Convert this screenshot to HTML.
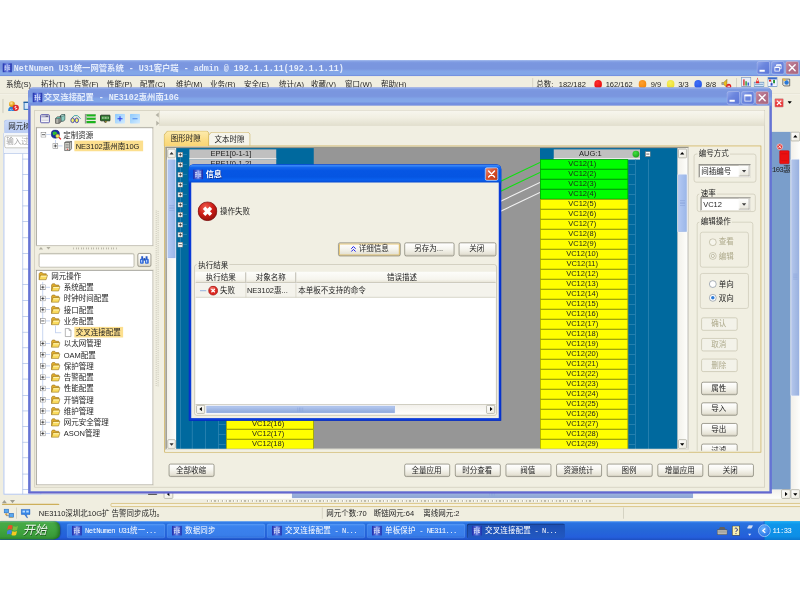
<!DOCTYPE html><html><head><meta charset="utf-8"><title>NetNumen U31</title><style>
html,body{margin:0;padding:0;background:#fff;}
body{width:800px;height:600px;overflow:hidden;position:relative;font-family:"Liberation Sans","Noto Sans CJK SC",sans-serif;}
#scr{position:absolute;left:0;top:60px;width:1280px;height:768px;transform:scale(.625);transform-origin:0 0;overflow:hidden;background:#F0EEE0;font-size:12px;line-height:12px;color:#1E1E1E;filter:blur(.55px);}
#scr div,#scr span.t,#scr svg.i{position:absolute;box-sizing:border-box;}
.t{white-space:nowrap;line-height:12px;font-size:12px;}
b{font-weight:bold;}
.mono{font-family:"Liberation Mono","Noto Sans CJK SC",monospace;}
.sim{font-family:"Liberation Mono","Noto Sans CJK SC",monospace;font-size:11.5px;letter-spacing:-.9px;}
.sim .cj{font-size:12px;letter-spacing:.2px;}
.ttl{background:linear-gradient(#A6BEEE 0,#7F9BE2 3px,#7A96DF 6px,#7A96DF 14px,#82A5E8 18px,#82A7E8 23px,#7390E0 25px,#7390E0 100%);}
.ttxt{color:#E4ECFB;font-weight:bold;font-size:13.33px;line-height:14px;}
.cbtn{border:1px solid rgba(255,255,255,.4);border-radius:3px;background:linear-gradient(135deg,#8FA6EA,#6C86DE 40%,#5B76D8);}
.cbtn.x{background:linear-gradient(135deg,#C98A9E,#B3718A 45%,#A8657E);}
.btn{border:1px solid #716F62;border-radius:3px;background:linear-gradient(#FFFFFF,#F6F5EF 45%,#E6E3D6 85%,#CFCBBC);text-align:center;font-size:12px;line-height:19px;white-space:nowrap;padding-right:2px;}
.btn.dis{border-color:#BFBBA4;background:#F3F2E9;color:#AEAA8C;}
.grp{border:1px solid #C7C4B0;border-radius:4px;}
.glab{background:#F0EEE0;padding:0 2px;}
.sbv{background:linear-gradient(90deg,#F2F0EA,#FEFEFB);}
.sbh{background:linear-gradient(#F2F0EA,#FEFEFB);}
.thumb{background:linear-gradient(90deg,#B4C9F4,#9AB6E8);border:1px solid #F4F7FD;border-radius:2px;box-shadow:inset 0 0 0 1px #98B2E4;}
.thumbh{background:linear-gradient(#BCCEF2,#A3BAE6 45%,#8DA8DA);border:1px solid #F4F7FD;border-radius:2px;box-shadow:inset 0 0 0 1px #98B2E4;}
.sbtn{background:linear-gradient(135deg,#FFFFFF,#ECEADF);border:1px solid #9C9A8C;border-radius:2px;}
.pm{background:#fff;border:1px solid #8A8A8A;}
.tb{background:linear-gradient(#3F8CF3,#2A71E0 12%,#2567D8 50%,#245EDC 85%,#1D4FC0);}
.ti{border-radius:3px;background:linear-gradient(#4C94F6,#3B82EE 20%,#397EEA 80%,#2C6CDC);box-shadow:inset 0 0 0 1px rgba(255,255,255,.12);color:#fff;}
.ti.act{background:linear-gradient(#1B4DAF,#1E52B7 30%,#2258C2);box-shadow:inset 1px 1px 1px rgba(0,0,0,.35);}
</style></head><body><div id="scr"><div class="ttl" style="left:0px;top:0px;width:1280px;height:26px;"></div><svg class="i" style="left:4px;top:5px" width="15" height="15" viewBox="0 0 16 16"><defs><linearGradient id="ai" x1="0" x2="1"><stop offset="0" stop-color="#1B2AA8"/><stop offset=".5" stop-color="#6F86E8"/><stop offset="1" stop-color="#1B2AA8"/></linearGradient></defs><rect width="16" height="16" fill="url(#ai)"/><path d="M3 5h3M10 4h3M3 8h4M9 8h4M4 11h2M10 11h3M8 2v12M5 4l-1 9M11 5v7" stroke="#E8EEFF" stroke-width="1.2" fill="none" opacity=".9"/></svg><span class="t ttxt mono" style="left:22px;top:7px;letter-spacing:0px;"><b>NetNumen U31统一网管系统 - U31客户端 - admin @ 192.1.1.11(192.1.1.11)</b></span><div class="cbtn" style="left:1211px;top:2px;width:21px;height:21px;"><svg class="i" style="left:-1px;top:-1px" width="21" height="21" viewBox="0 0 20 20"><rect x="4" y="13" width="8" height="3" fill="#fff"/></svg></div><div class="cbtn" style="left:1234px;top:2px;width:21px;height:21px;"><svg class="i" style="left:-1px;top:-1px" width="21" height="21" viewBox="0 0 20 20"><path d="M8 7.5V5.5h7v6H13" fill="none" stroke="#fff" stroke-width="1.2"/><path d="M8 5.800h7" stroke="#fff" stroke-width="1.800"/><rect x="5.5" y="9" width="7" height="6" fill="none" stroke="#fff" stroke-width="1.2"/><path d="M5.500 9.300h7" stroke="#fff" stroke-width="1.800"/></svg></div><div class="cbtn x" style="left:1257px;top:2px;width:21px;height:21px;"><svg class="i" style="left:-1px;top:-1px" width="21" height="21" viewBox="0 0 20 20"><path d="M5.5 5.5l9 9M14.5 5.5l-9 9" stroke="#fff" stroke-width="2.2" stroke-linecap="round"/></svg></div><div style="left:0px;top:26px;width:1280px;height:30px;background:#F0EEE0;"></div><span class="t " style="left:9.6px;top:33px;">系统(S)</span><span class="t " style="left:65.6px;top:33px;">拓扑(T)</span><span class="t " style="left:118.4px;top:33px;">告警(F)</span><span class="t " style="left:171.2px;top:33px;">性能(P)</span><span class="t " style="left:224px;top:33px;">配置(C)</span><span class="t " style="left:281.6px;top:33px;">维护(M)</span><span class="t " style="left:336px;top:33px;">业务(R)</span><span class="t " style="left:390.4px;top:33px;">安全(E)</span><span class="t " style="left:446.4px;top:33px;">统计(A)</span><span class="t " style="left:497.6px;top:33px;">收藏(V)</span><span class="t " style="left:552px;top:33px;">窗口(W)</span><span class="t " style="left:609.6px;top:33px;">帮助(H)</span><div style="left:852px;top:29px;width:1px;height:20px;background:#C5C2B2;"></div><span class="t " style="left:858px;top:33px;">总数:</span><span class="t " style="left:894px;top:33px;">182/182</span><div style="left:951px;top:32px;width:12px;height:13px;border-radius:6px 6px 5px 5px;background:radial-gradient(circle at 40% 35%,#FF3030,#E00000);"></div><span class="t " style="left:969px;top:33px;">162/162</span><div style="left:1022px;top:32px;width:12px;height:13px;border-radius:6px 6px 5px 5px;background:radial-gradient(circle at 40% 35%,#FFA030,#F08000);"></div><span class="t " style="left:1041px;top:33px;">9/9</span><div style="left:1067px;top:32px;width:12px;height:13px;border-radius:6px 6px 5px 5px;background:radial-gradient(circle at 40% 35%,#F8F060,#E8D820);"></div><span class="t " style="left:1085px;top:33px;">3/3</span><div style="left:1111px;top:32px;width:12px;height:13px;border-radius:6px 6px 5px 5px;background:radial-gradient(circle at 40% 35%,#4070F8,#2050E0);"></div><span class="t " style="left:1129px;top:33px;">8/8</span><svg class="i" style="left:1153px;top:29px" width="18" height="18" viewBox="0 0 18 18"><path d="M2 7h3l5-5v13l-5-5H2z" fill="#E8C020" stroke="#806010" stroke-width=".8"/><path d="M2 7h3v4H2z" fill="#A0A0A0"/><circle cx="13" cy="13" r="4" fill="#E02020"/><path d="M11 13h4" stroke="#fff" stroke-width="1.5"/></svg><div style="left:1178px;top:29px;width:1px;height:20px;background:#C5C2B2;"></div><svg class="i" style="left:1186px;top:27px" width="16" height="16" viewBox="0 0 16 16"><rect x=".5" y=".5" width="15" height="15" fill="#E8F0FA" stroke="#5A78A8"/><rect x="3" y="4" width="2.5" height="10" fill="#E04040"/><rect x="6.5" y="7" width="2.5" height="7" fill="#40A040"/><rect x="10" y="9" width="2.5" height="5" fill="#4060D0"/></svg><svg class="i" style="left:1206px;top:27px" width="17" height="16" viewBox="0 0 17 16"><rect x=".5" y="8.5" width="16" height="7" fill="#D8E8F8" stroke="#5080B0"/><path d="M2 12h13" stroke="#5080B0"/><path d="M6 1l3 9H3z" fill="#E82020"/><path d="M6 4v3" stroke="#fff" stroke-width="1.2"/></svg><svg class="i" style="left:1228px;top:27px" width="16" height="16" viewBox="0 0 16 16"><rect x=".5" y=".5" width="15" height="15" fill="#F4F8FF" stroke="#4878B8"/><rect x="1" y="1" width="14" height="3" fill="#3868C8"/><circle cx="4" cy="6" r="1.8" fill="#E02020"/><rect x="9" y="5" width="3" height="5" fill="#20A020"/><rect x="5" y="10" width="3" height="4" fill="#2040D0"/><path d="M10.5 4v8M6.500 6v7" stroke="#406090" stroke-width=".6"/></svg><svg class="i" style="left:1250px;top:27px" width="16" height="16" viewBox="0 0 16 16"><path d="M2.5 3.500h11v11h-9l-2-2z" fill="#E8E8E0" stroke="#303030"/><circle cx="8.500" cy="9" r="3.500" fill="#2878D8"/><path d="M1 2l5 1 2 3-4 .5z" fill="#E8B848"/></svg><div style="left:0px;top:56px;width:1280px;height:38px;background:#F0EEE0;"></div><div style="left:0px;top:53px;width:1280px;height:1px;background:#DCD9C9;"></div><div style="left:0px;top:54px;width:1280px;height:1px;background:#F8F7F0;"></div><div style="left:3.5px;top:62px;width:2.5px;height:23px;background:linear-gradient(90deg,#C9C6B6,#DEDCCF);border-radius:1px;"></div><svg class="i" style="left:12px;top:65px" width="19" height="18" viewBox="0 0 19 18"><defs><radialGradient id="hd" cx=".4" cy=".35" r=".7"><stop offset="0" stop-color="#FFE9A0"/><stop offset=".6" stop-color="#E8A820"/><stop offset="1" stop-color="#B07810"/></radialGradient></defs><path d="M1 16.500c0-5 2.500-7 6-7s6 2 6 7z" fill="#2C84DC"/><path d="M4 13.500l2 2 2-2" stroke="#BCDCFF" stroke-width="1.200" fill="none"/><circle cx="7" cy="5.500" r="4.600" fill="url(#hd)"/><circle cx="13.200" cy="11.500" r="5" fill="#E02828"/><path d="M11 10.500h2.200v-2M15.500 12.500h-2.300v2" stroke="#fff" stroke-width="1.500" fill="none"/></svg><svg class="i" style="left:37px;top:66px" width="16" height="16" viewBox="0 0 16 16"><rect x="1.500" y="2" width="13" height="11" fill="#D4E6F8" stroke="#2C74B8" stroke-width="1.600"/><path d="M.5 1.500h15" stroke="#1C5C9C" stroke-width="2"/></svg><svg class="i" style="left:1239px;top:61px" width="15" height="15" viewBox="0 0 15 15"><rect x=".5" y=".5" width="14" height="14" rx="1.500" fill="#E83838" stroke="#C0C0C0"/><rect x="1.500" y="1.500" width="12" height="5" fill="#F07070" opacity=".7"/><path d="M4 4l7 7M11 4l-7 7" stroke="#fff" stroke-width="1.800"/></svg><svg class="i" style="left:1260px;top:65px" width="7" height="6" viewBox="0 0 7 6"><polygon points="0,1 7,1 3.5,5" fill="#000"/></svg><div style="left:6px;top:95px;width:60px;height:22px;background:linear-gradient(#C9D9F8,#BBCDF3);border-radius:6px 0 0 0;border-top:1.5px solid #9CB4EC;border-left:1px solid #A8BEEE;"></div><span class="t " style="left:13px;top:101px;">网元树</span><div style="left:5px;top:117px;width:60px;height:578px;background:#F3F6FB;border-left:1px solid #B8CBEB;"></div><div style="left:7px;top:121px;width:60px;height:20px;background:#fff;border:1px solid #A8A8A0;border-radius:3px;"></div><span class="t " style="left:10px;top:125px;color:#A0A0A0;">输入过滤</span><div style="left:6px;top:149px;width:60px;height:546px;background:#fff;border:1px solid #A9BEE6;"></div><div style="left:36px;top:150px;width:1px;height:545px;background:#9DB4E4;"></div><div style="left:36px;top:158px;width:10px;height:1px;background:#9DB4E4;"></div><div style="left:36px;top:183px;width:10px;height:1px;background:#9DB4E4;"></div><div style="left:36px;top:208px;width:10px;height:1px;background:#9DB4E4;"></div><div style="left:36px;top:233px;width:10px;height:1px;background:#9DB4E4;"></div><div style="left:36px;top:258px;width:10px;height:1px;background:#9DB4E4;"></div><div style="left:36px;top:284px;width:10px;height:1px;background:#9DB4E4;"></div><div style="left:36px;top:309px;width:10px;height:1px;background:#9DB4E4;"></div><div style="left:36px;top:334px;width:10px;height:1px;background:#9DB4E4;"></div><div style="left:36px;top:359px;width:10px;height:1px;background:#9DB4E4;"></div><div style="left:36px;top:384px;width:10px;height:1px;background:#9DB4E4;"></div><div style="left:36px;top:410px;width:10px;height:1px;background:#9DB4E4;"></div><div style="left:36px;top:435px;width:10px;height:1px;background:#9DB4E4;"></div><div style="left:36px;top:460px;width:10px;height:1px;background:#9DB4E4;"></div><div style="left:36px;top:485px;width:10px;height:1px;background:#9DB4E4;"></div><div style="left:36px;top:510px;width:10px;height:1px;background:#9DB4E4;"></div><div style="left:36px;top:536px;width:10px;height:1px;background:#9DB4E4;"></div><div style="left:36px;top:561px;width:10px;height:1px;background:#9DB4E4;"></div><div style="left:36px;top:586px;width:10px;height:1px;background:#9DB4E4;"></div><div style="left:36px;top:611px;width:10px;height:1px;background:#9DB4E4;"></div><div style="left:36px;top:636px;width:10px;height:1px;background:#9DB4E4;"></div><div style="left:36px;top:662px;width:10px;height:1px;background:#9DB4E4;"></div><div style="left:36px;top:687px;width:10px;height:1px;background:#9DB4E4;"></div><div style="left:6px;top:694.5px;width:247px;height:1.5px;background:#BCCEF0;"></div><div style="left:237px;top:693.5px;width:14px;height:2px;background:#5A5A5A;"></div><div style="left:1200px;top:115px;width:66px;height:573px;background:#7A9ECB;"></div><svg class="i" style="left:1240px;top:132px" width="24" height="36" viewBox="0 0 24 36"><rect x="7.500" y="13" width="15" height="21" rx="1.500" fill="#EC1010" stroke="#C00808" stroke-width=".8"/><path d="M10 18h10M10 29h10" stroke="#C81010" stroke-width="1"/><circle cx="7.600" cy="6.700" r="4.600" fill="#E03838" stroke="#F4D0D0" stroke-width="1.200"/><path d="M5.600 4.700l4 4M9.600 4.700l-4 4" stroke="#fff" stroke-width="1.400"/></svg><span class="t sim" style="left:1235px;top:170px;">103<span class="cj">惠州</span></span><div class="sbv" style="left:1265px;top:115px;width:15px;height:587px;"></div><div class="sbtn" style="left:1265px;top:115px;width:15px;height:15px;"></div><svg class="i" style="left:1269px;top:119px" width="7" height="6" viewBox="0 0 7 6"><polygon points="0,5 3.5,1 7,5" fill="#000"/></svg><div class="thumb" style="left:1265px;top:158px;width:15px;height:380px;background:linear-gradient(90deg,#B4C7EC,#98B0DE);"></div><div style="left:1269px;top:342.0px;width:7px;height:1px;background:#8CA6DC;"></div><div style="left:1269px;top:344.5px;width:7px;height:1px;background:#8CA6DC;"></div><div style="left:1269px;top:347.0px;width:7px;height:1px;background:#8CA6DC;"></div><div style="left:1269px;top:349.5px;width:7px;height:1px;background:#8CA6DC;"></div><div class="sbtn" style="left:1265px;top:687px;width:15px;height:15px;"></div><svg class="i" style="left:1269px;top:692px" width="7" height="6" viewBox="0 0 7 6"><polygon points="0,1 7,1 3.5,5" fill="#000"/></svg><div class="sbh" style="left:262px;top:687px;width:1003px;height:15px;"></div><div class="sbtn" style="left:262px;top:687px;width:15px;height:15px;"></div><svg class="i" style="left:266px;top:691px" width="6" height="7" viewBox="0 0 6 7"><polygon points="5,0 5,7 1,3.5" fill="#000"/></svg><div class="thumbh" style="left:466px;top:687px;width:644px;height:15px;background:linear-gradient(#ABC0E6,#8AA3D3);box-shadow:inset 0 0 0 1px #8CA4D6;"></div><div style="left:783.0px;top:691px;width:1px;height:7px;background:#8CA6DC;"></div><div style="left:785.5px;top:691px;width:1px;height:7px;background:#8CA6DC;"></div><div style="left:788.0px;top:691px;width:1px;height:7px;background:#8CA6DC;"></div><div style="left:790.5px;top:691px;width:1px;height:7px;background:#8CA6DC;"></div><div class="sbtn" style="left:1250px;top:687px;width:15px;height:15px;"></div><svg class="i" style="left:1255px;top:691px" width="6" height="7" viewBox="0 0 6 7"><polygon points="1,0 1,7 5,3.5" fill="#000"/></svg><div style="left:3px;top:704px;width:0px;height:0px;border-left:4.5px solid transparent;border-right:4.5px solid transparent;border-bottom:5px solid #9F9D8F;"></div><div style="left:16px;top:704px;width:0px;height:0px;border-left:4.5px solid transparent;border-right:4.5px solid transparent;border-top:5px solid #9F9D8F;"></div><div style="left:331px;top:704px;width:616px;height:3px;background:repeating-linear-gradient(90deg,#BDBAAB 0,#BDBAAB 2px,#FDFDFA 2px,#FDFDFA 3px,transparent 3px,transparent 6px);"></div><div style="left:3px;top:710px;width:92px;height:2px;background:#CDAF5A;border-radius:2px 2px 0 0;"></div><div style="left:177px;top:708.5px;width:1110px;height:6.5px;border:1.5px solid #CDAF5A;background:#F6F1DF;border-radius:2px;"></div><svg class="i" style="left:6px;top:718px" width="17" height="15" viewBox="0 0 17 15"><rect x=".5" y=".5" width="7" height="6" fill="#58A8F0" stroke="#2868B8"/><rect x="8.500" y="7.500" width="7" height="6" fill="#58A8F0" stroke="#2868B8"/><path d="M4 7v4h4" stroke="#606060" fill="none"/><rect x="2" y="8" width="4" height="1.500" fill="#E8A020"/><rect x="10" y="14" width="4" height="1" fill="#E8A020"/></svg><div style="left:26px;top:716px;width:1px;height:18px;background:#C5C2B2;"></div><svg class="i" style="left:33px;top:718px" width="16" height="16" viewBox="0 0 16 16"><path d="M1 1h14v8H9l2 6-5-6H1z" fill="#3888E8" stroke="#1858B8" stroke-width=".8"/><rect x="3" y="3" width="4" height="3" fill="#B8DCFF"/><rect x="9" y="3" width="4" height="3" fill="#B8DCFF"/></svg><span class="t " style="left:62px;top:718.5px;">NE3110深圳北10G扩 告警同步成功。</span><div style="left:515px;top:716px;width:1px;height:18px;background:#C5C2B2;"></div><span class="t " style="left:522px;top:718.5px;">网元个数:70</span><span class="t " style="left:598px;top:718.5px;">断链网元:64</span><span class="t " style="left:677px;top:718.5px;">离线网元:2</span><div style="left:997px;top:716px;width:1px;height:18px;background:#C5C2B2;"></div><div class="tb" style="left:0px;top:738px;width:1280px;height:30px;"></div><div style="left:0px;top:738px;width:96px;height:28.5px;background:linear-gradient(#69BE69 0,#46AA46 12%,#40A440 50%,#389A38 85%,#2E882E);border-radius:0 10px 10px 0;box-shadow:1px 0 2px rgba(0,0,0,.4),inset -6px 0 6px -3px rgba(0,60,0,.45);"></div><svg class="i" style="left:11px;top:743px" width="21" height="19" viewBox="0 0 20 18"><path d="M2 2q4-2 7 0l-1.500 6q-3-2-7 0z" fill="#E8502A"/><path d="M10 2.500q3 2 7 0l-1.500 6q-4 2-7 0z" fill="#7CC040"/><path d="M.8 9.500q4-2 7 0l-1.500 6q-3-2-7 0z" fill="#4080E0"/><path d="M8.500 10q3 2 7 0l-1.500 6q-4 2-7 0z" fill="#F8C820"/></svg><span class="t " style="left:38px;top:743px;color:rgba(255,255,255,.88);font-size:19px;line-height:20px;transform:skewX(-14deg);text-shadow:1px 1px 1px rgba(0,0,0,.45);">开始</span><div class="ti" style="left:107px;top:742px;width:157px;height:23px;"></div><svg class="i" style="left:115px;top:745px" width="16" height="16" viewBox="0 0 16 16"><defs><linearGradient id="ai" x1="0" x2="1"><stop offset="0" stop-color="#1B2AA8"/><stop offset=".5" stop-color="#6F86E8"/><stop offset="1" stop-color="#1B2AA8"/></linearGradient></defs><rect width="16" height="16" fill="url(#ai)"/><path d="M3 5h3M10 4h3M3 8h4M9 8h4M4 11h2M10 11h3M8 2v12M5 4l-1 9M11 5v7" stroke="#E8EEFF" stroke-width="1.2" fill="none" opacity=".9"/></svg><span class="t sim" style="left:136px;top:748px;color:#fff;">NetNumen U31<span class="cj">统一</span>...</span><div class="ti" style="left:267px;top:742px;width:157px;height:23px;"></div><svg class="i" style="left:275px;top:745px" width="16" height="16" viewBox="0 0 16 16"><defs><linearGradient id="ai" x1="0" x2="1"><stop offset="0" stop-color="#1B2AA8"/><stop offset=".5" stop-color="#6F86E8"/><stop offset="1" stop-color="#1B2AA8"/></linearGradient></defs><rect width="16" height="16" fill="url(#ai)"/><path d="M3 5h3M10 4h3M3 8h4M9 8h4M4 11h2M10 11h3M8 2v12M5 4l-1 9M11 5v7" stroke="#E8EEFF" stroke-width="1.2" fill="none" opacity=".9"/></svg><span class="t sim" style="left:296px;top:748px;color:#fff;"><span class="cj">数据同步</span></span><div class="ti" style="left:427px;top:742px;width:157px;height:23px;"></div><svg class="i" style="left:435px;top:745px" width="16" height="16" viewBox="0 0 16 16"><defs><linearGradient id="ai" x1="0" x2="1"><stop offset="0" stop-color="#1B2AA8"/><stop offset=".5" stop-color="#6F86E8"/><stop offset="1" stop-color="#1B2AA8"/></linearGradient></defs><rect width="16" height="16" fill="url(#ai)"/><path d="M3 5h3M10 4h3M3 8h4M9 8h4M4 11h2M10 11h3M8 2v12M5 4l-1 9M11 5v7" stroke="#E8EEFF" stroke-width="1.2" fill="none" opacity=".9"/></svg><span class="t sim" style="left:456px;top:748px;color:#fff;"><span class="cj">交叉连接配置</span> - N...</span><div class="ti" style="left:587px;top:742px;width:157px;height:23px;"></div><svg class="i" style="left:595px;top:745px" width="16" height="16" viewBox="0 0 16 16"><defs><linearGradient id="ai" x1="0" x2="1"><stop offset="0" stop-color="#1B2AA8"/><stop offset=".5" stop-color="#6F86E8"/><stop offset="1" stop-color="#1B2AA8"/></linearGradient></defs><rect width="16" height="16" fill="url(#ai)"/><path d="M3 5h3M10 4h3M3 8h4M9 8h4M4 11h2M10 11h3M8 2v12M5 4l-1 9M11 5v7" stroke="#E8EEFF" stroke-width="1.2" fill="none" opacity=".9"/></svg><span class="t sim" style="left:616px;top:748px;color:#fff;"><span class="cj">单板保护</span> - NE311...</span><div class="ti act" style="left:747px;top:742px;width:157px;height:23px;"></div><svg class="i" style="left:755px;top:745px" width="16" height="16" viewBox="0 0 16 16"><defs><linearGradient id="ai" x1="0" x2="1"><stop offset="0" stop-color="#1B2AA8"/><stop offset=".5" stop-color="#6F86E8"/><stop offset="1" stop-color="#1B2AA8"/></linearGradient></defs><rect width="16" height="16" fill="url(#ai)"/><path d="M3 5h3M10 4h3M3 8h4M9 8h4M4 11h2M10 11h3M8 2v12M5 4l-1 9M11 5v7" stroke="#E8EEFF" stroke-width="1.2" fill="none" opacity=".9"/></svg><span class="t sim" style="left:776px;top:748px;color:#fff;"><span class="cj">交叉连接配置</span> - N...</span><div style="left:1222px;top:738px;width:58px;height:30px;background:linear-gradient(#19B0F4,#0F96EA 15%,#0D8FE6 80%,#0B78D0);border-left:1px solid #0A5FC0;"></div><span class="t sim" style="left:1236px;top:747px;color:#fff;">11:33</span><div style="left:1213px;top:743px;width:20px;height:20px;border-radius:10px;background:radial-gradient(circle at 40% 35%,#6FB6FF,#2A78E8 70%);border:1px solid #CFE4FF;"></div><svg class="i" style="left:1218px;top:748px" width="9" height="10" viewBox="0 0 9 10"><path d="M6.500 1.500L2.500 5l4 3.500" stroke="#fff" stroke-width="2" fill="none"/></svg><svg class="i" style="left:1147px;top:746px" width="17" height="14" viewBox="0 0 17 14"><rect x=".5" y="5.500" width="16" height="8" rx="1" fill="#C8C8C0" stroke="#404040"/><path d="M3 5l2-4h7l2 4" fill="#606060"/><path d="M2 8h13M2 10.500h13" stroke="#707070" stroke-width=".8"/></svg><svg class="i" style="left:1171px;top:745px" width="13" height="16" viewBox="0 0 13 16"><rect x=".5" y=".5" width="12" height="15" fill="#F8F0B0" stroke="#303030"/><path d="M4.500 5q2-3 4 0t-2 4v1M6.500 12v1.500" stroke="#303080" stroke-width="1.500" fill="none"/></svg><svg class="i" style="left:1193px;top:743px" width="13" height="20" viewBox="0 0 13 20"><path d="M3 6l2-4h6l-2 4z" fill="#D0D8E8" stroke="#F0F4FF" stroke-width=".8"/><path d="M4 15h5l-2.500 3z" fill="#E8F0FF"/></svg><div style="left:45px;top:44px;width:1190px;height:650px;background:#6573D4;border-radius:8px 8px 0 0;border-bottom:3px solid #6466CE;"></div><div class="ttl" style="left:45px;top:44px;width:1190px;height:29px;border-radius:8px 8px 0 0;"></div><div style="left:49px;top:73px;width:1182px;height:617px;background:#F0EEE0;"></div><svg class="i" style="left:52px;top:52px" width="16" height="16" viewBox="0 0 16 16"><defs><linearGradient id="ai" x1="0" x2="1"><stop offset="0" stop-color="#1B2AA8"/><stop offset=".5" stop-color="#6F86E8"/><stop offset="1" stop-color="#1B2AA8"/></linearGradient></defs><rect width="16" height="16" fill="url(#ai)"/><path d="M3 5h3M10 4h3M3 8h4M9 8h4M4 11h2M10 11h3M8 2v12M5 4l-1 9M11 5v7" stroke="#E8EEFF" stroke-width="1.2" fill="none" opacity=".9"/></svg><span class="t ttxt mono" style="left:70px;top:54px;"><b>交叉连接配置 - NE3102惠州南10G</b></span><div class="cbtn" style="left:1163px;top:50px;width:21px;height:21px;"><svg class="i" style="left:-1px;top:-1px" width="21" height="21" viewBox="0 0 20 20"><rect x="4" y="13" width="8" height="3" fill="#fff"/></svg></div><div class="cbtn" style="left:1186px;top:50px;width:21px;height:21px;"><svg class="i" style="left:-1px;top:-1px" width="21" height="21" viewBox="0 0 20 20"><rect x="5.5" y="6" width="9.500" height="9" fill="none" stroke="#fff" stroke-width="1.100"/><rect x="5" y="5" width="10.500" height="2.800" fill="#fff"/></svg></div><div class="cbtn x" style="left:1209px;top:50px;width:21px;height:21px;"><svg class="i" style="left:-1px;top:-1px" width="21" height="21" viewBox="0 0 20 20"><path d="M5.5 5.5l9 9M14.5 5.5l-9 9" stroke="#fff" stroke-width="2.2" stroke-linecap="round"/></svg></div><div style="left:55px;top:80px;width:1169px;height:604px;border:1px solid #C9C6B5;background:#F1EFE2;"></div><div style="left:255px;top:81px;width:968px;height:24px;border-left:1px solid #DAD7C6;background:linear-gradient(#F7F6EE,#F1EFE2 50%,#E3E0CF);border-bottom:1px solid #DAD7C6;"></div><svg class="i" style="left:64px;top:86px" width="16" height="16" viewBox="0 0 16 16"><rect x="1" y="1.500" width="14" height="13" rx="1.500" fill="#fff" stroke="#4C4CA4" stroke-width="1.500"/><rect x="2" y="2.500" width="12" height="3.500" fill="#A8A8C8"/><rect x="9" y="3.200" width="4" height="1.600" fill="#505070"/><path d="M2.500 8.500h11M2.500 11h11" stroke="#B8B8C8"/></svg><svg class="i" style="left:88px;top:86px" width="17" height="16" viewBox="0 0 17 16"><path d="M8 4l3-2.500h5v8L13 12H8z" fill="#8CCCC0" stroke="#1C3C3C" stroke-width="1"/><path d="M11 1.500L8 4h5l3-2.500z" fill="#C8ECE4" stroke="#1C3C3C" stroke-width=".7"/><path d="M1 7.500L4 5h5.500v8L6.500 15.500H1z" fill="#B4B4AC" stroke="#202020" stroke-width="1"/><path d="M1 7.500h5.500v8M6.500 7.500L9.500 5" fill="none" stroke="#202020" stroke-width=".9"/><path d="M4 5L1 7.500h5.500L9.500 5z" fill="#5CB4A8"/></svg><svg class="i" style="left:112px;top:86px" width="18" height="16" viewBox="0 0 18 16"><path d="M3 7q3-6 9-4l5 5" fill="none" stroke="#3CA0A0" stroke-width="1.500"/><ellipse cx="4.200" cy="10.500" rx="2.800" ry="3.800" fill="#F4F468" stroke="#2C2CB0" stroke-width="1.300"/><ellipse cx="10.800" cy="10.500" rx="2.800" ry="3.800" fill="#F4F468" stroke="#2C2CB0" stroke-width="1.300"/><path d="M7 10h1" stroke="#2C2CB0"/></svg><svg class="i" style="left:135px;top:86px" width="19" height="16" viewBox="0 0 19 16"><path d="M1.500 0v16" stroke="#808080" stroke-width="1.600"/><rect x="3.500" y="1" width="14.500" height="3.400" fill="#18B818" stroke="#4C8C4C" stroke-width=".5"/><rect x="3.500" y="6.300" width="14.500" height="3.400" fill="#18B818" stroke="#4C8C4C" stroke-width=".5"/><rect x="3.500" y="11.600" width="14.500" height="3.400" fill="#18B818" stroke="#4C8C4C" stroke-width=".5"/><path d="M3.500 5.300h14.500M3.500 10.600h14.500" stroke="#F4F4F4" stroke-width=".9"/></svg><svg class="i" style="left:160px;top:86px" width="17" height="16" viewBox="0 0 17 16"><rect x=".8" y="2.300" width="15.400" height="9" rx="1" fill="#2C7C2C" stroke="#182818" stroke-width="1.300"/><rect x="3" y="4.800" width="11" height="3.400" fill="#A8D8A0"/><path d="M5 4.800v3.400M7 4.800v3.400M10 4.800v3.400M12 4.800v3.400" stroke="#2C6C2C" stroke-width=".9"/><path d="M6.500 11.500h4.500l-1 3H7.500z" fill="#303030"/><rect x="8.500" y="12" width="2" height="1.600" fill="#E8D020"/></svg><svg class="i" style="left:184px;top:86px" width="16" height="16" viewBox="0 0 16 16"><defs><linearGradient id="pg" x1="0" y1="0" x2="1" y2="1"><stop offset="0" stop-color="#8CC8FC"/><stop offset="1" stop-color="#D4ECFF"/></linearGradient></defs><rect width="16" height="16" rx="1.500" fill="url(#pg)"/><path d="M4 8h8M8 4v8" stroke="#2C40E8" stroke-width="1.700"/></svg><svg class="i" style="left:208px;top:86px" width="16" height="16" viewBox="0 0 16 16"><rect width="16" height="16" rx="1.500" fill="url(#pg)"/><path d="M4 8h8" stroke="#4C88EC" stroke-width="1.800"/></svg><div style="left:249px;top:84px;width:0px;height:0px;border-top:4.5px solid transparent;border-bottom:4.5px solid transparent;border-right:5px solid #B4B2A4;"></div><div style="left:250px;top:97px;width:0px;height:0px;border-top:4.5px solid transparent;border-bottom:4.5px solid transparent;border-left:5px solid #B4B2A4;"></div><div style="left:249px;top:241px;width:2px;height:1px;background:#C0BDAE;"></div><div style="left:252px;top:242px;width:2px;height:1px;background:#C0BDAE;"></div><div style="left:249px;top:244px;width:2px;height:1px;background:#C0BDAE;"></div><div style="left:252px;top:245px;width:2px;height:1px;background:#C0BDAE;"></div><div style="left:249px;top:247px;width:2px;height:1px;background:#C0BDAE;"></div><div style="left:252px;top:248px;width:2px;height:1px;background:#C0BDAE;"></div><div style="left:249px;top:250px;width:2px;height:1px;background:#C0BDAE;"></div><div style="left:252px;top:251px;width:2px;height:1px;background:#C0BDAE;"></div><div style="left:249px;top:253px;width:2px;height:1px;background:#C0BDAE;"></div><div style="left:252px;top:254px;width:2px;height:1px;background:#C0BDAE;"></div><div style="left:249px;top:256px;width:2px;height:1px;background:#C0BDAE;"></div><div style="left:252px;top:257px;width:2px;height:1px;background:#C0BDAE;"></div><div style="left:249px;top:259px;width:2px;height:1px;background:#C0BDAE;"></div><div style="left:252px;top:260px;width:2px;height:1px;background:#C0BDAE;"></div><div style="left:249px;top:262px;width:2px;height:1px;background:#C0BDAE;"></div><div style="left:252px;top:263px;width:2px;height:1px;background:#C0BDAE;"></div><div style="left:249px;top:265px;width:2px;height:1px;background:#C0BDAE;"></div><div style="left:252px;top:266px;width:2px;height:1px;background:#C0BDAE;"></div><div style="left:249px;top:268px;width:2px;height:1px;background:#C0BDAE;"></div><div style="left:252px;top:269px;width:2px;height:1px;background:#C0BDAE;"></div><div style="left:249px;top:271px;width:2px;height:1px;background:#C0BDAE;"></div><div style="left:252px;top:272px;width:2px;height:1px;background:#C0BDAE;"></div><div style="left:249px;top:274px;width:2px;height:1px;background:#C0BDAE;"></div><div style="left:252px;top:275px;width:2px;height:1px;background:#C0BDAE;"></div><div style="left:249px;top:277px;width:2px;height:1px;background:#C0BDAE;"></div><div style="left:252px;top:278px;width:2px;height:1px;background:#C0BDAE;"></div><div style="left:249px;top:280px;width:2px;height:1px;background:#C0BDAE;"></div><div style="left:252px;top:281px;width:2px;height:1px;background:#C0BDAE;"></div><div style="left:249px;top:283px;width:2px;height:1px;background:#C0BDAE;"></div><div style="left:252px;top:284px;width:2px;height:1px;background:#C0BDAE;"></div><div style="left:249px;top:286px;width:2px;height:1px;background:#C0BDAE;"></div><div style="left:252px;top:287px;width:2px;height:1px;background:#C0BDAE;"></div><div style="left:249px;top:289px;width:2px;height:1px;background:#C0BDAE;"></div><div style="left:252px;top:290px;width:2px;height:1px;background:#C0BDAE;"></div><div style="left:249px;top:292px;width:2px;height:1px;background:#C0BDAE;"></div><div style="left:252px;top:293px;width:2px;height:1px;background:#C0BDAE;"></div><div style="left:249px;top:295px;width:2px;height:1px;background:#C0BDAE;"></div><div style="left:252px;top:296px;width:2px;height:1px;background:#C0BDAE;"></div><div style="left:249px;top:298px;width:2px;height:1px;background:#C0BDAE;"></div><div style="left:252px;top:299px;width:2px;height:1px;background:#C0BDAE;"></div><div style="left:249px;top:301px;width:2px;height:1px;background:#C0BDAE;"></div><div style="left:252px;top:302px;width:2px;height:1px;background:#C0BDAE;"></div><div style="left:249px;top:304px;width:2px;height:1px;background:#C0BDAE;"></div><div style="left:252px;top:305px;width:2px;height:1px;background:#C0BDAE;"></div><div style="left:249px;top:307px;width:2px;height:1px;background:#C0BDAE;"></div><div style="left:252px;top:308px;width:2px;height:1px;background:#C0BDAE;"></div><div style="left:249px;top:310px;width:2px;height:1px;background:#C0BDAE;"></div><div style="left:252px;top:311px;width:2px;height:1px;background:#C0BDAE;"></div><div style="left:249px;top:313px;width:2px;height:1px;background:#C0BDAE;"></div><div style="left:252px;top:314px;width:2px;height:1px;background:#C0BDAE;"></div><div style="left:249px;top:316px;width:2px;height:1px;background:#C0BDAE;"></div><div style="left:252px;top:317px;width:2px;height:1px;background:#C0BDAE;"></div><div style="left:249px;top:319px;width:2px;height:1px;background:#C0BDAE;"></div><div style="left:252px;top:320px;width:2px;height:1px;background:#C0BDAE;"></div><div style="left:249px;top:322px;width:2px;height:1px;background:#C0BDAE;"></div><div style="left:252px;top:323px;width:2px;height:1px;background:#C0BDAE;"></div><div style="left:249px;top:325px;width:2px;height:1px;background:#C0BDAE;"></div><div style="left:252px;top:326px;width:2px;height:1px;background:#C0BDAE;"></div><div style="left:249px;top:328px;width:2px;height:1px;background:#C0BDAE;"></div><div style="left:252px;top:329px;width:2px;height:1px;background:#C0BDAE;"></div><div style="left:249px;top:331px;width:2px;height:1px;background:#C0BDAE;"></div><div style="left:252px;top:332px;width:2px;height:1px;background:#C0BDAE;"></div><div style="left:249px;top:334px;width:2px;height:1px;background:#C0BDAE;"></div><div style="left:252px;top:335px;width:2px;height:1px;background:#C0BDAE;"></div><div style="left:249px;top:337px;width:2px;height:1px;background:#C0BDAE;"></div><div style="left:252px;top:338px;width:2px;height:1px;background:#C0BDAE;"></div><div style="left:249px;top:340px;width:2px;height:1px;background:#C0BDAE;"></div><div style="left:252px;top:341px;width:2px;height:1px;background:#C0BDAE;"></div><div style="left:249px;top:343px;width:2px;height:1px;background:#C0BDAE;"></div><div style="left:252px;top:344px;width:2px;height:1px;background:#C0BDAE;"></div><div style="left:249px;top:346px;width:2px;height:1px;background:#C0BDAE;"></div><div style="left:252px;top:347px;width:2px;height:1px;background:#C0BDAE;"></div><div style="left:249px;top:349px;width:2px;height:1px;background:#C0BDAE;"></div><div style="left:252px;top:350px;width:2px;height:1px;background:#C0BDAE;"></div><div style="left:249px;top:352px;width:2px;height:1px;background:#C0BDAE;"></div><div style="left:252px;top:353px;width:2px;height:1px;background:#C0BDAE;"></div><div style="left:249px;top:355px;width:2px;height:1px;background:#C0BDAE;"></div><div style="left:252px;top:356px;width:2px;height:1px;background:#C0BDAE;"></div><div style="left:249px;top:358px;width:2px;height:1px;background:#C0BDAE;"></div><div style="left:252px;top:359px;width:2px;height:1px;background:#C0BDAE;"></div><div style="left:249px;top:361px;width:2px;height:1px;background:#C0BDAE;"></div><div style="left:252px;top:362px;width:2px;height:1px;background:#C0BDAE;"></div><div style="left:249px;top:364px;width:2px;height:1px;background:#C0BDAE;"></div><div style="left:252px;top:365px;width:2px;height:1px;background:#C0BDAE;"></div><div style="left:249px;top:367px;width:2px;height:1px;background:#C0BDAE;"></div><div style="left:252px;top:368px;width:2px;height:1px;background:#C0BDAE;"></div><div style="left:249px;top:370px;width:2px;height:1px;background:#C0BDAE;"></div><div style="left:252px;top:371px;width:2px;height:1px;background:#C0BDAE;"></div><div style="left:249px;top:373px;width:2px;height:1px;background:#C0BDAE;"></div><div style="left:252px;top:374px;width:2px;height:1px;background:#C0BDAE;"></div><div style="left:249px;top:376px;width:2px;height:1px;background:#C0BDAE;"></div><div style="left:252px;top:377px;width:2px;height:1px;background:#C0BDAE;"></div><div style="left:249px;top:379px;width:2px;height:1px;background:#C0BDAE;"></div><div style="left:252px;top:380px;width:2px;height:1px;background:#C0BDAE;"></div><div style="left:249px;top:382px;width:2px;height:1px;background:#C0BDAE;"></div><div style="left:252px;top:383px;width:2px;height:1px;background:#C0BDAE;"></div><div style="left:249px;top:385px;width:2px;height:1px;background:#C0BDAE;"></div><div style="left:252px;top:386px;width:2px;height:1px;background:#C0BDAE;"></div><div style="left:249px;top:388px;width:2px;height:1px;background:#C0BDAE;"></div><div style="left:252px;top:389px;width:2px;height:1px;background:#C0BDAE;"></div><div style="left:249px;top:391px;width:2px;height:1px;background:#C0BDAE;"></div><div style="left:252px;top:392px;width:2px;height:1px;background:#C0BDAE;"></div><div style="left:249px;top:394px;width:2px;height:1px;background:#C0BDAE;"></div><div style="left:252px;top:395px;width:2px;height:1px;background:#C0BDAE;"></div><div style="left:249px;top:397px;width:2px;height:1px;background:#C0BDAE;"></div><div style="left:252px;top:398px;width:2px;height:1px;background:#C0BDAE;"></div><div style="left:249px;top:400px;width:2px;height:1px;background:#C0BDAE;"></div><div style="left:252px;top:401px;width:2px;height:1px;background:#C0BDAE;"></div><div style="left:249px;top:403px;width:2px;height:1px;background:#C0BDAE;"></div><div style="left:252px;top:404px;width:2px;height:1px;background:#C0BDAE;"></div><div style="left:249px;top:406px;width:2px;height:1px;background:#C0BDAE;"></div><div style="left:252px;top:407px;width:2px;height:1px;background:#C0BDAE;"></div><div style="left:249px;top:409px;width:2px;height:1px;background:#C0BDAE;"></div><div style="left:252px;top:410px;width:2px;height:1px;background:#C0BDAE;"></div><div style="left:249px;top:412px;width:2px;height:1px;background:#C0BDAE;"></div><div style="left:252px;top:413px;width:2px;height:1px;background:#C0BDAE;"></div><div style="left:249px;top:415px;width:2px;height:1px;background:#C0BDAE;"></div><div style="left:252px;top:416px;width:2px;height:1px;background:#C0BDAE;"></div><div style="left:249px;top:418px;width:2px;height:1px;background:#C0BDAE;"></div><div style="left:252px;top:419px;width:2px;height:1px;background:#C0BDAE;"></div><div style="left:249px;top:421px;width:2px;height:1px;background:#C0BDAE;"></div><div style="left:252px;top:422px;width:2px;height:1px;background:#C0BDAE;"></div><div style="left:249px;top:424px;width:2px;height:1px;background:#C0BDAE;"></div><div style="left:252px;top:425px;width:2px;height:1px;background:#C0BDAE;"></div><div style="left:249px;top:427px;width:2px;height:1px;background:#C0BDAE;"></div><div style="left:252px;top:428px;width:2px;height:1px;background:#C0BDAE;"></div><div style="left:249px;top:430px;width:2px;height:1px;background:#C0BDAE;"></div><div style="left:252px;top:431px;width:2px;height:1px;background:#C0BDAE;"></div><div style="left:249px;top:433px;width:2px;height:1px;background:#C0BDAE;"></div><div style="left:252px;top:434px;width:2px;height:1px;background:#C0BDAE;"></div><div style="left:249px;top:436px;width:2px;height:1px;background:#C0BDAE;"></div><div style="left:252px;top:437px;width:2px;height:1px;background:#C0BDAE;"></div><div style="left:249px;top:439px;width:2px;height:1px;background:#C0BDAE;"></div><div style="left:252px;top:440px;width:2px;height:1px;background:#C0BDAE;"></div><div style="left:249px;top:442px;width:2px;height:1px;background:#C0BDAE;"></div><div style="left:252px;top:443px;width:2px;height:1px;background:#C0BDAE;"></div><div style="left:249px;top:445px;width:2px;height:1px;background:#C0BDAE;"></div><div style="left:252px;top:446px;width:2px;height:1px;background:#C0BDAE;"></div><div style="left:249px;top:448px;width:2px;height:1px;background:#C0BDAE;"></div><div style="left:252px;top:449px;width:2px;height:1px;background:#C0BDAE;"></div><div style="left:249px;top:451px;width:2px;height:1px;background:#C0BDAE;"></div><div style="left:252px;top:452px;width:2px;height:1px;background:#C0BDAE;"></div><div style="left:249px;top:454px;width:2px;height:1px;background:#C0BDAE;"></div><div style="left:252px;top:455px;width:2px;height:1px;background:#C0BDAE;"></div><div style="left:249px;top:457px;width:2px;height:1px;background:#C0BDAE;"></div><div style="left:252px;top:458px;width:2px;height:1px;background:#C0BDAE;"></div><div style="left:249px;top:460px;width:2px;height:1px;background:#C0BDAE;"></div><div style="left:252px;top:461px;width:2px;height:1px;background:#C0BDAE;"></div><div style="left:249px;top:463px;width:2px;height:1px;background:#C0BDAE;"></div><div style="left:252px;top:464px;width:2px;height:1px;background:#C0BDAE;"></div><div style="left:249px;top:466px;width:2px;height:1px;background:#C0BDAE;"></div><div style="left:252px;top:467px;width:2px;height:1px;background:#C0BDAE;"></div><div style="left:249px;top:469px;width:2px;height:1px;background:#C0BDAE;"></div><div style="left:252px;top:470px;width:2px;height:1px;background:#C0BDAE;"></div><div style="left:249px;top:472px;width:2px;height:1px;background:#C0BDAE;"></div><div style="left:252px;top:473px;width:2px;height:1px;background:#C0BDAE;"></div><div style="left:249px;top:475px;width:2px;height:1px;background:#C0BDAE;"></div><div style="left:252px;top:476px;width:2px;height:1px;background:#C0BDAE;"></div><div style="left:249px;top:478px;width:2px;height:1px;background:#C0BDAE;"></div><div style="left:252px;top:479px;width:2px;height:1px;background:#C0BDAE;"></div><div style="left:249px;top:481px;width:2px;height:1px;background:#C0BDAE;"></div><div style="left:252px;top:482px;width:2px;height:1px;background:#C0BDAE;"></div><div style="left:249px;top:484px;width:2px;height:1px;background:#C0BDAE;"></div><div style="left:252px;top:485px;width:2px;height:1px;background:#C0BDAE;"></div><div style="left:249px;top:487px;width:2px;height:1px;background:#C0BDAE;"></div><div style="left:252px;top:488px;width:2px;height:1px;background:#C0BDAE;"></div><div style="left:249px;top:490px;width:2px;height:1px;background:#C0BDAE;"></div><div style="left:252px;top:491px;width:2px;height:1px;background:#C0BDAE;"></div><div style="left:249px;top:493px;width:2px;height:1px;background:#C0BDAE;"></div><div style="left:252px;top:494px;width:2px;height:1px;background:#C0BDAE;"></div><div style="left:249px;top:496px;width:2px;height:1px;background:#C0BDAE;"></div><div style="left:252px;top:497px;width:2px;height:1px;background:#C0BDAE;"></div><div style="left:249px;top:499px;width:2px;height:1px;background:#C0BDAE;"></div><div style="left:252px;top:500px;width:2px;height:1px;background:#C0BDAE;"></div><div style="left:249px;top:502px;width:2px;height:1px;background:#C0BDAE;"></div><div style="left:252px;top:503px;width:2px;height:1px;background:#C0BDAE;"></div><div style="left:249px;top:505px;width:2px;height:1px;background:#C0BDAE;"></div><div style="left:252px;top:506px;width:2px;height:1px;background:#C0BDAE;"></div><div style="left:249px;top:508px;width:2px;height:1px;background:#C0BDAE;"></div><div style="left:252px;top:509px;width:2px;height:1px;background:#C0BDAE;"></div><div style="left:249px;top:511px;width:2px;height:1px;background:#C0BDAE;"></div><div style="left:252px;top:512px;width:2px;height:1px;background:#C0BDAE;"></div><div style="left:249px;top:514px;width:2px;height:1px;background:#C0BDAE;"></div><div style="left:252px;top:515px;width:2px;height:1px;background:#C0BDAE;"></div><div style="left:249px;top:517px;width:2px;height:1px;background:#C0BDAE;"></div><div style="left:252px;top:518px;width:2px;height:1px;background:#C0BDAE;"></div><div style="left:249px;top:520px;width:2px;height:1px;background:#C0BDAE;"></div><div style="left:252px;top:521px;width:2px;height:1px;background:#C0BDAE;"></div><div style="left:58px;top:108px;width:187px;height:189px;background:#fff;border:1px solid;border-color:#87857A #B5B3A6 #B5B3A6 #87857A;box-shadow:0 0 0 1px #E0DDCF;"></div><svg class="i" style="left:65px;top:115px" width="9" height="9" viewBox="0 0 9 9"><rect x=".5" y=".5" width="8" height="8" fill="#fff" stroke="#6E6E6E"/><path d="M2 4.5h5" stroke="#000"/></svg><div style="left:74px;top:119px;width:7px;height:1px;background:#A8BEE8;"></div><svg class="i" style="left:81px;top:111px" width="18" height="18" viewBox="0 0 18 18"><circle cx="7.500" cy="7.500" r="6.500" fill="#1830A0" stroke="#102070"/><path d="M3 5q3-3 6-1t-1 4-4 1z" fill="#30C030"/><path d="M8 10q3-1 4 1t-3 2z" fill="#30C030"/><circle cx="11" cy="10.500" r="2.800" fill="#F8F060" stroke="#C8A020" stroke-width=".8"/><path d="M13 12.500l3.500 3.500" stroke="#E02020" stroke-width="2"/></svg><span class="t " style="left:101px;top:114px;">定制资源</span><div style="left:88px;top:128px;width:1px;height:5px;background:#A8BEE8;"></div><svg class="i" style="left:84px;top:133px" width="9" height="9" viewBox="0 0 9 9"><rect x=".5" y=".5" width="8" height="8" fill="#fff" stroke="#6E6E6E"/><path d="M2 4.5h5" stroke="#000"/><path d="M4.5 2v5" stroke="#000"/></svg><div style="left:93px;top:137px;width:7px;height:1px;background:#A8BEE8;"></div><svg class="i" style="left:102px;top:129px" width="14" height="17" viewBox="0 0 14 17"><path d="M1.500 3l3-2h8v12l-3 3h-8z" fill="#D8D8D0" stroke="#404040"/><path d="M1.500 3h8v13M9.500 3l3-2" fill="none" stroke="#404040"/><path d="M3 6h5M3 8.500h5M3 11h5" stroke="#707070"/><rect x="5" y="13" width="2" height="1.500" fill="#E02020"/></svg><div style="left:119px;top:129px;width:110px;height:17px;background:#FCDF8E;"></div><span class="t " style="left:121px;top:132px;">NE3102惠州南10G</span><svg class="i" style="left:62px;top:298px" width="7" height="6" viewBox="0 0 7 6"><polygon points="0,5 3.5,1 7,5" fill="#B0AE9F"/></svg><svg class="i" style="left:74px;top:298px" width="7" height="6" viewBox="0 0 7 6"><polygon points="0,1 7,1 3.5,5" fill="#B0AE9F"/></svg><div style="left:117px;top:300px;width:70px;height:3px;background:repeating-linear-gradient(90deg,#BDBAAB 0,#BDBAAB 2px,transparent 2px,transparent 4px);"></div><div style="left:62px;top:309px;width:153px;height:23px;background:#fff;border:1px solid #A5A394;border-radius:3px;box-shadow:inset 0 1px 1px #D8D6C8;"></div><div class="btn" style="left:220px;top:309px;width:22px;height:22px;border-radius:3px;"></div><svg class="i" style="left:223px;top:312px" width="16" height="16" viewBox="0 0 16 16"><path d="M3 2h3v5H3zM10 2h3v5h-3z" fill="#2858C8"/><rect x="1" y="6" width="6" height="8" rx="1.500" fill="#3068D8"/><rect x="9" y="6" width="6" height="8" rx="1.500" fill="#3068D8"/><rect x="6.500" y="5" width="3" height="4" fill="#2050B0"/><rect x="2.500" y="8" width="2" height="4" fill="#A8C8FF"/><rect x="10.500" y="8" width="2" height="4" fill="#A8C8FF"/></svg><div style="left:58px;top:336px;width:187px;height:344px;background:#fff;border:1px solid;border-color:#87857A #B5B3A6 #B5B3A6 #87857A;box-shadow:0 0 0 1px #E0DDCF;"></div><div style="left:68px;top:355px;width:1px;height:243px;background:#A8BEE8;"></div><svg class="i" style="left:61px;top:338px" width="16" height="16" viewBox="0 0 16 16"><path d="M1.500 13.500V4l1.500-2h3.500l1.500 2h5v2.500" fill="#E2AE2C" stroke="#8E6A14" stroke-width=".9"/><path d="M1.500 13.500L3.800 6.200h11.200l-2.300 7.300z" fill="#FADB5E" stroke="#94701A" stroke-width=".9"/><path d="M4.500 7.200h9.300l-.5 1.600h-9.300z" fill="#FFF3B4"/></svg><span class="t " style="left:82px;top:340px;">网元操作</span><svg class="i" style="left:64px;top:359px" width="9" height="9" viewBox="0 0 9 9"><rect x=".5" y=".5" width="8" height="8" fill="#fff" stroke="#6E6E6E"/><path d="M2 4.5h5" stroke="#000"/><path d="M4.5 2v5" stroke="#000"/></svg><div style="left:73px;top:363px;width:7px;height:1px;background:#A8BEE8;"></div><svg class="i" style="left:81px;top:356px" width="16" height="16" viewBox="0 0 16 16"><path d="M1.500 13.500V4l1.500-2h3.500l1.500 2h5v2.500" fill="#E2AE2C" stroke="#8E6A14" stroke-width=".9"/><path d="M1.500 13.500L3.800 6.200h11.200l-2.300 7.300z" fill="#FADB5E" stroke="#94701A" stroke-width=".9"/><path d="M4.500 7.200h9.300l-.5 1.600h-9.300z" fill="#FFF3B4"/></svg><span class="t " style="left:102px;top:358px;">系统配置</span><svg class="i" style="left:64px;top:377px" width="9" height="9" viewBox="0 0 9 9"><rect x=".5" y=".5" width="8" height="8" fill="#fff" stroke="#6E6E6E"/><path d="M2 4.5h5" stroke="#000"/><path d="M4.5 2v5" stroke="#000"/></svg><div style="left:73px;top:381px;width:7px;height:1px;background:#A8BEE8;"></div><svg class="i" style="left:81px;top:374px" width="16" height="16" viewBox="0 0 16 16"><path d="M1.500 13.500V4l1.500-2h3.500l1.500 2h5v2.500" fill="#E2AE2C" stroke="#8E6A14" stroke-width=".9"/><path d="M1.500 13.500L3.800 6.200h11.200l-2.300 7.300z" fill="#FADB5E" stroke="#94701A" stroke-width=".9"/><path d="M4.500 7.200h9.300l-.5 1.600h-9.300z" fill="#FFF3B4"/></svg><span class="t " style="left:102px;top:376px;">时钟时间配置</span><svg class="i" style="left:64px;top:395px" width="9" height="9" viewBox="0 0 9 9"><rect x=".5" y=".5" width="8" height="8" fill="#fff" stroke="#6E6E6E"/><path d="M2 4.5h5" stroke="#000"/><path d="M4.5 2v5" stroke="#000"/></svg><div style="left:73px;top:399px;width:7px;height:1px;background:#A8BEE8;"></div><svg class="i" style="left:81px;top:392px" width="16" height="16" viewBox="0 0 16 16"><path d="M1.500 13.500V4l1.500-2h3.500l1.500 2h5v2.500" fill="#E2AE2C" stroke="#8E6A14" stroke-width=".9"/><path d="M1.500 13.500L3.800 6.200h11.200l-2.300 7.300z" fill="#FADB5E" stroke="#94701A" stroke-width=".9"/><path d="M4.500 7.200h9.300l-.5 1.600h-9.300z" fill="#FFF3B4"/></svg><span class="t " style="left:102px;top:394px;">接口配置</span><svg class="i" style="left:64px;top:413px" width="9" height="9" viewBox="0 0 9 9"><rect x=".5" y=".5" width="8" height="8" fill="#fff" stroke="#6E6E6E"/><path d="M2 4.5h5" stroke="#000"/></svg><div style="left:73px;top:417px;width:7px;height:1px;background:#A8BEE8;"></div><svg class="i" style="left:81px;top:410px" width="16" height="16" viewBox="0 0 16 16"><path d="M1.500 13.500V4l1.500-2h3.500l1.500 2h5v2.500" fill="#E2AE2C" stroke="#8E6A14" stroke-width=".9"/><path d="M1.500 13.500L3.800 6.200h11.200l-2.300 7.300z" fill="#FADB5E" stroke="#94701A" stroke-width=".9"/><path d="M4.500 7.200h9.300l-.5 1.600h-9.300z" fill="#FFF3B4"/></svg><span class="t " style="left:102px;top:412px;">业务配置</span><div style="left:88px;top:425px;width:1px;height:11px;background:#A8BEE8;"></div><div style="left:88px;top:436px;width:10px;height:1px;background:#A8BEE8;"></div><svg class="i" style="left:101px;top:428px" width="16" height="16" viewBox="0 0 16 16"><path d="M3.5 1.5h6l3 3v10h-9z" fill="#fff" stroke="#8A8A8A"/><path d="M9.5 1.5v3h3" fill="#DDD" stroke="#8A8A8A"/></svg><div style="left:119px;top:427px;width:78px;height:17px;background:#FCDF8E;"></div><span class="t " style="left:121px;top:430px;">交叉连接配置</span><svg class="i" style="left:64px;top:449px" width="9" height="9" viewBox="0 0 9 9"><rect x=".5" y=".5" width="8" height="8" fill="#fff" stroke="#6E6E6E"/><path d="M2 4.5h5" stroke="#000"/><path d="M4.5 2v5" stroke="#000"/></svg><div style="left:73px;top:453px;width:7px;height:1px;background:#A8BEE8;"></div><svg class="i" style="left:81px;top:446px" width="16" height="16" viewBox="0 0 16 16"><path d="M1.500 13.500V4l1.500-2h3.500l1.500 2h5v2.500" fill="#E2AE2C" stroke="#8E6A14" stroke-width=".9"/><path d="M1.500 13.500L3.800 6.200h11.200l-2.300 7.300z" fill="#FADB5E" stroke="#94701A" stroke-width=".9"/><path d="M4.500 7.200h9.300l-.5 1.600h-9.300z" fill="#FFF3B4"/></svg><span class="t " style="left:102px;top:448px;">以太网管理</span><svg class="i" style="left:64px;top:467px" width="9" height="9" viewBox="0 0 9 9"><rect x=".5" y=".5" width="8" height="8" fill="#fff" stroke="#6E6E6E"/><path d="M2 4.5h5" stroke="#000"/><path d="M4.5 2v5" stroke="#000"/></svg><div style="left:73px;top:471px;width:7px;height:1px;background:#A8BEE8;"></div><svg class="i" style="left:81px;top:464px" width="16" height="16" viewBox="0 0 16 16"><path d="M1.500 13.500V4l1.500-2h3.500l1.500 2h5v2.500" fill="#E2AE2C" stroke="#8E6A14" stroke-width=".9"/><path d="M1.500 13.500L3.800 6.200h11.200l-2.300 7.300z" fill="#FADB5E" stroke="#94701A" stroke-width=".9"/><path d="M4.500 7.200h9.300l-.5 1.600h-9.300z" fill="#FFF3B4"/></svg><span class="t " style="left:102px;top:466px;">OAM配置</span><svg class="i" style="left:64px;top:485px" width="9" height="9" viewBox="0 0 9 9"><rect x=".5" y=".5" width="8" height="8" fill="#fff" stroke="#6E6E6E"/><path d="M2 4.5h5" stroke="#000"/><path d="M4.5 2v5" stroke="#000"/></svg><div style="left:73px;top:489px;width:7px;height:1px;background:#A8BEE8;"></div><svg class="i" style="left:81px;top:482px" width="16" height="16" viewBox="0 0 16 16"><path d="M1.500 13.500V4l1.500-2h3.500l1.500 2h5v2.500" fill="#E2AE2C" stroke="#8E6A14" stroke-width=".9"/><path d="M1.500 13.500L3.800 6.200h11.200l-2.300 7.300z" fill="#FADB5E" stroke="#94701A" stroke-width=".9"/><path d="M4.500 7.200h9.300l-.5 1.600h-9.300z" fill="#FFF3B4"/></svg><span class="t " style="left:102px;top:484px;">保护管理</span><svg class="i" style="left:64px;top:503px" width="9" height="9" viewBox="0 0 9 9"><rect x=".5" y=".5" width="8" height="8" fill="#fff" stroke="#6E6E6E"/><path d="M2 4.5h5" stroke="#000"/><path d="M4.5 2v5" stroke="#000"/></svg><div style="left:73px;top:507px;width:7px;height:1px;background:#A8BEE8;"></div><svg class="i" style="left:81px;top:500px" width="16" height="16" viewBox="0 0 16 16"><path d="M1.500 13.500V4l1.500-2h3.500l1.500 2h5v2.500" fill="#E2AE2C" stroke="#8E6A14" stroke-width=".9"/><path d="M1.500 13.500L3.800 6.200h11.200l-2.300 7.300z" fill="#FADB5E" stroke="#94701A" stroke-width=".9"/><path d="M4.500 7.200h9.300l-.5 1.600h-9.300z" fill="#FFF3B4"/></svg><span class="t " style="left:102px;top:502px;">告警配置</span><svg class="i" style="left:64px;top:521px" width="9" height="9" viewBox="0 0 9 9"><rect x=".5" y=".5" width="8" height="8" fill="#fff" stroke="#6E6E6E"/><path d="M2 4.5h5" stroke="#000"/><path d="M4.5 2v5" stroke="#000"/></svg><div style="left:73px;top:525px;width:7px;height:1px;background:#A8BEE8;"></div><svg class="i" style="left:81px;top:518px" width="16" height="16" viewBox="0 0 16 16"><path d="M1.500 13.500V4l1.500-2h3.500l1.500 2h5v2.500" fill="#E2AE2C" stroke="#8E6A14" stroke-width=".9"/><path d="M1.500 13.500L3.800 6.200h11.200l-2.300 7.300z" fill="#FADB5E" stroke="#94701A" stroke-width=".9"/><path d="M4.500 7.200h9.300l-.5 1.600h-9.300z" fill="#FFF3B4"/></svg><span class="t " style="left:102px;top:520px;">性能配置</span><svg class="i" style="left:64px;top:539px" width="9" height="9" viewBox="0 0 9 9"><rect x=".5" y=".5" width="8" height="8" fill="#fff" stroke="#6E6E6E"/><path d="M2 4.5h5" stroke="#000"/><path d="M4.5 2v5" stroke="#000"/></svg><div style="left:73px;top:543px;width:7px;height:1px;background:#A8BEE8;"></div><svg class="i" style="left:81px;top:536px" width="16" height="16" viewBox="0 0 16 16"><path d="M1.500 13.500V4l1.500-2h3.500l1.500 2h5v2.500" fill="#E2AE2C" stroke="#8E6A14" stroke-width=".9"/><path d="M1.500 13.500L3.800 6.200h11.200l-2.300 7.300z" fill="#FADB5E" stroke="#94701A" stroke-width=".9"/><path d="M4.500 7.200h9.300l-.5 1.600h-9.300z" fill="#FFF3B4"/></svg><span class="t " style="left:102px;top:538px;">开销管理</span><svg class="i" style="left:64px;top:557px" width="9" height="9" viewBox="0 0 9 9"><rect x=".5" y=".5" width="8" height="8" fill="#fff" stroke="#6E6E6E"/><path d="M2 4.5h5" stroke="#000"/><path d="M4.5 2v5" stroke="#000"/></svg><div style="left:73px;top:561px;width:7px;height:1px;background:#A8BEE8;"></div><svg class="i" style="left:81px;top:554px" width="16" height="16" viewBox="0 0 16 16"><path d="M1.500 13.500V4l1.500-2h3.500l1.500 2h5v2.500" fill="#E2AE2C" stroke="#8E6A14" stroke-width=".9"/><path d="M1.500 13.500L3.800 6.200h11.200l-2.300 7.300z" fill="#FADB5E" stroke="#94701A" stroke-width=".9"/><path d="M4.500 7.200h9.300l-.5 1.600h-9.300z" fill="#FFF3B4"/></svg><span class="t " style="left:102px;top:556px;">维护管理</span><svg class="i" style="left:64px;top:575px" width="9" height="9" viewBox="0 0 9 9"><rect x=".5" y=".5" width="8" height="8" fill="#fff" stroke="#6E6E6E"/><path d="M2 4.5h5" stroke="#000"/><path d="M4.5 2v5" stroke="#000"/></svg><div style="left:73px;top:579px;width:7px;height:1px;background:#A8BEE8;"></div><svg class="i" style="left:81px;top:572px" width="16" height="16" viewBox="0 0 16 16"><path d="M1.500 13.500V4l1.500-2h3.500l1.500 2h5v2.500" fill="#E2AE2C" stroke="#8E6A14" stroke-width=".9"/><path d="M1.500 13.500L3.800 6.200h11.200l-2.300 7.300z" fill="#FADB5E" stroke="#94701A" stroke-width=".9"/><path d="M4.500 7.200h9.300l-.5 1.600h-9.300z" fill="#FFF3B4"/></svg><span class="t " style="left:102px;top:574px;">网元安全管理</span><svg class="i" style="left:64px;top:593px" width="9" height="9" viewBox="0 0 9 9"><rect x=".5" y=".5" width="8" height="8" fill="#fff" stroke="#6E6E6E"/><path d="M2 4.5h5" stroke="#000"/><path d="M4.5 2v5" stroke="#000"/></svg><div style="left:73px;top:597px;width:7px;height:1px;background:#A8BEE8;"></div><svg class="i" style="left:81px;top:590px" width="16" height="16" viewBox="0 0 16 16"><path d="M1.500 13.500V4l1.500-2h3.500l1.500 2h5v2.500" fill="#E2AE2C" stroke="#8E6A14" stroke-width=".9"/><path d="M1.500 13.500L3.800 6.200h11.200l-2.300 7.300z" fill="#FADB5E" stroke="#94701A" stroke-width=".9"/><path d="M4.500 7.200h9.300l-.5 1.600h-9.300z" fill="#FFF3B4"/></svg><span class="t " style="left:102px;top:592px;">ASON管理</span><svg class="i" style="left:333px;top:115px" width="68" height="23" viewBox="0 0 68 23"><path d="M.5 23V6L5 .5h59l3 3V23" fill="#F5F4EB" stroke="#C6A544"/></svg><span class="t " style="left:343px;top:121px;">文本时隙</span><div style="left:263px;top:137px;width:955px;height:491px;border:1px solid #C6A544;background:#F1EFE2;box-shadow:inset 1px 1px 0 #F6EFD6;"></div><svg class="i" style="left:262px;top:113px" width="73" height="25" viewBox="0 0 73 25"><defs><linearGradient id="tg" x1="0" y1="0" x2="0" y2="1"><stop offset="0" stop-color="#FDEBAE"/><stop offset=".6" stop-color="#FBDD86"/><stop offset="1" stop-color="#F9D574"/></linearGradient></defs><path d="M.5 25V7L6 .5h63l3 3V25" fill="url(#tg)" stroke="#C6A544"/></svg><span class="t " style="left:273px;top:120px;">图形时隙</span><div style="left:265px;top:139px;width:837px;height:485px;background:#969696;border:2px solid;border-color:#98968A #E4E2D6 #E4E2D6 #98968A;"></div><div class="sbv" style="left:267px;top:141px;width:15px;height:482px;"></div><div class="sbtn" style="left:268px;top:142px;width:13px;height:15px;"></div><svg class="i" style="left:271px;top:146px" width="7" height="6" viewBox="0 0 7 6"><polygon points="0,5 3.5,1 7,5" fill="#333"/></svg><div class="thumb" style="left:267px;top:158px;width:15px;height:160px;"></div><div style="left:271px;top:232.0px;width:8px;height:1px;background:#8CA6DC;"></div><div style="left:271px;top:234.5px;width:8px;height:1px;background:#8CA6DC;"></div><div style="left:271px;top:237.0px;width:8px;height:1px;background:#8CA6DC;"></div><div style="left:271px;top:239.5px;width:8px;height:1px;background:#8CA6DC;"></div><div class="sbtn" style="left:268px;top:607px;width:13px;height:15px;"></div><svg class="i" style="left:271px;top:612px" width="7" height="6" viewBox="0 0 7 6"><polygon points="0,1 7,1 3.5,5" fill="#333"/></svg><div style="left:282px;top:141px;width:220px;height:482px;background:#00699E;"></div><div style="left:288px;top:151px;width:1px;height:472px;background:#3A8DB8;"></div><svg class="i" style="left:284px;top:147px" width="9" height="9" viewBox="0 0 9 9"><rect x=".5" y=".5" width="8" height="8" fill="#fff" stroke="#6E6E6E"/><path d="M2 4.5h5" stroke="#000"/><path d="M4.5 2v5" stroke="#000"/></svg><div style="left:293px;top:151px;width:6px;height:1px;background:#3A8DB8;"></div><svg class="i" style="left:284px;top:163px" width="9" height="9" viewBox="0 0 9 9"><rect x=".5" y=".5" width="8" height="8" fill="#fff" stroke="#6E6E6E"/><path d="M2 4.5h5" stroke="#000"/><path d="M4.5 2v5" stroke="#000"/></svg><div style="left:293px;top:167px;width:6px;height:1px;background:#3A8DB8;"></div><svg class="i" style="left:284px;top:179px" width="9" height="9" viewBox="0 0 9 9"><rect x=".5" y=".5" width="8" height="8" fill="#fff" stroke="#6E6E6E"/><path d="M2 4.5h5" stroke="#000"/><path d="M4.5 2v5" stroke="#000"/></svg><div style="left:293px;top:183px;width:6px;height:1px;background:#3A8DB8;"></div><svg class="i" style="left:284px;top:195px" width="9" height="9" viewBox="0 0 9 9"><rect x=".5" y=".5" width="8" height="8" fill="#fff" stroke="#6E6E6E"/><path d="M2 4.5h5" stroke="#000"/><path d="M4.5 2v5" stroke="#000"/></svg><div style="left:293px;top:199px;width:6px;height:1px;background:#3A8DB8;"></div><svg class="i" style="left:284px;top:211px" width="9" height="9" viewBox="0 0 9 9"><rect x=".5" y=".5" width="8" height="8" fill="#fff" stroke="#6E6E6E"/><path d="M2 4.5h5" stroke="#000"/><path d="M4.5 2v5" stroke="#000"/></svg><div style="left:293px;top:215px;width:6px;height:1px;background:#3A8DB8;"></div><svg class="i" style="left:284px;top:227px" width="9" height="9" viewBox="0 0 9 9"><rect x=".5" y=".5" width="8" height="8" fill="#fff" stroke="#6E6E6E"/><path d="M2 4.5h5" stroke="#000"/><path d="M4.5 2v5" stroke="#000"/></svg><div style="left:293px;top:231px;width:6px;height:1px;background:#3A8DB8;"></div><svg class="i" style="left:284px;top:243px" width="9" height="9" viewBox="0 0 9 9"><rect x=".5" y=".5" width="8" height="8" fill="#fff" stroke="#6E6E6E"/><path d="M2 4.5h5" stroke="#000"/><path d="M4.5 2v5" stroke="#000"/></svg><div style="left:293px;top:247px;width:6px;height:1px;background:#3A8DB8;"></div><svg class="i" style="left:284px;top:259px" width="9" height="9" viewBox="0 0 9 9"><rect x=".5" y=".5" width="8" height="8" fill="#fff" stroke="#6E6E6E"/><path d="M2 4.5h5" stroke="#000"/><path d="M4.5 2v5" stroke="#000"/></svg><div style="left:293px;top:263px;width:6px;height:1px;background:#3A8DB8;"></div><svg class="i" style="left:284px;top:275px" width="9" height="9" viewBox="0 0 9 9"><rect x=".5" y=".5" width="8" height="8" fill="#fff" stroke="#6E6E6E"/><path d="M2 4.5h5" stroke="#000"/><path d="M4.5 2v5" stroke="#000"/></svg><div style="left:293px;top:279px;width:6px;height:1px;background:#3A8DB8;"></div><svg class="i" style="left:284px;top:291px" width="9" height="9" viewBox="0 0 9 9"><rect x=".5" y=".5" width="8" height="8" fill="#fff" stroke="#6E6E6E"/><path d="M2 4.5h5" stroke="#000"/></svg><div style="left:293px;top:295px;width:6px;height:1px;background:#3A8DB8;"></div><div style="left:303px;top:143px;width:139px;height:16px;background:#C0C0C0;border-bottom:2px solid #F0F0F0;text-align:center;line-height:13px;padding-right:6px;">EPE1[0-1-1]</div><div style="left:303px;top:159px;width:139px;height:16px;background:#C0C0C0;border-bottom:2px solid #F0F0F0;text-align:center;line-height:13px;padding-right:6px;">EPE1[0-1-2]</div><div style="left:307px;top:300px;width:1px;height:323px;background:#3A8DB8;"></div><div style="left:328px;top:300px;width:1px;height:323px;background:#3A8DB8;"></div><div style="left:349px;top:300px;width:1px;height:323px;background:#3A8DB8;"></div><div style="left:350px;top:551px;width:11px;height:1px;background:#3A8DB8;"></div><div style="left:350px;top:567px;width:11px;height:1px;background:#3A8DB8;"></div><div style="left:350px;top:583px;width:11px;height:1px;background:#3A8DB8;"></div><div style="left:350px;top:599px;width:11px;height:1px;background:#3A8DB8;"></div><div style="left:350px;top:615px;width:11px;height:1px;background:#3A8DB8;"></div><div style="left:362px;top:575px;width:140px;height:16px;background:#FFFF00;border:1px solid #8C8C00;text-align:center;line-height:13px;padding-right:6px;">VC12(16)</div><div style="left:362px;top:591px;width:140px;height:16px;background:#FFFF00;border:1px solid #8C8C00;text-align:center;line-height:13px;padding-right:6px;">VC12(17)</div><div style="left:362px;top:607px;width:140px;height:16px;background:#FFFF00;border:1px solid #8C8C00;text-align:center;line-height:13px;padding-right:6px;">VC12(18)</div><div style="left:864px;top:141px;width:220px;height:482px;background:#00699E;"></div><div style="left:886px;top:143px;width:138px;height:16px;background:#C0C0C0;border-bottom:2px solid #F0F0F0;text-align:center;line-height:13px;padding-right:21px;">AUG:1</div><div style="left:1012px;top:145px;width:11px;height:11px;border-radius:6px;background:radial-gradient(circle at 40% 35%,#40E040,#109010);"></div><svg class="i" style="left:1032px;top:146px" width="9" height="9" viewBox="0 0 9 9"><rect x=".5" y=".5" width="8" height="8" fill="#fff" stroke="#6E6E6E"/><path d="M2 4.5h5" stroke="#000"/></svg><div style="left:1016px;top:159px;width:1px;height:465px;background:#3A8DB8;"></div><div style="left:1037px;top:159px;width:1px;height:465px;background:#3A8DB8;"></div><div style="left:864px;top:159px;width:141px;height:16px;background:#00FF00;border:1px solid #008C00;text-align:center;line-height:13px;padding-right:6px;">VC12(1)</div><div style="left:1006px;top:167px;width:10px;height:1px;background:#3A8DB8;"></div><div style="left:864px;top:175px;width:141px;height:16px;background:#00FF00;border:1px solid #008C00;text-align:center;line-height:13px;padding-right:6px;">VC12(2)</div><div style="left:1006px;top:183px;width:10px;height:1px;background:#3A8DB8;"></div><div style="left:864px;top:191px;width:141px;height:16px;background:#00FF00;border:1px solid #008C00;text-align:center;line-height:13px;padding-right:6px;">VC12(3)</div><div style="left:1006px;top:199px;width:10px;height:1px;background:#3A8DB8;"></div><div style="left:864px;top:207px;width:141px;height:16px;background:#00FF00;border:1px solid #008C00;text-align:center;line-height:13px;padding-right:6px;">VC12(4)</div><div style="left:1006px;top:215px;width:10px;height:1px;background:#3A8DB8;"></div><div style="left:864px;top:223px;width:141px;height:16px;background:#FFFF00;border:1px solid #8C8C00;text-align:center;line-height:13px;padding-right:6px;">VC12(5)</div><div style="left:1006px;top:231px;width:10px;height:1px;background:#3A8DB8;"></div><div style="left:864px;top:239px;width:141px;height:16px;background:#FFFF00;border:1px solid #8C8C00;text-align:center;line-height:13px;padding-right:6px;">VC12(6)</div><div style="left:1006px;top:247px;width:10px;height:1px;background:#3A8DB8;"></div><div style="left:864px;top:255px;width:141px;height:16px;background:#FFFF00;border:1px solid #8C8C00;text-align:center;line-height:13px;padding-right:6px;">VC12(7)</div><div style="left:1006px;top:263px;width:10px;height:1px;background:#3A8DB8;"></div><div style="left:864px;top:271px;width:141px;height:16px;background:#FFFF00;border:1px solid #8C8C00;text-align:center;line-height:13px;padding-right:6px;">VC12(8)</div><div style="left:1006px;top:279px;width:10px;height:1px;background:#3A8DB8;"></div><div style="left:864px;top:287px;width:141px;height:16px;background:#FFFF00;border:1px solid #8C8C00;text-align:center;line-height:13px;padding-right:6px;">VC12(9)</div><div style="left:1006px;top:295px;width:10px;height:1px;background:#3A8DB8;"></div><div style="left:864px;top:303px;width:141px;height:16px;background:#FFFF00;border:1px solid #8C8C00;text-align:center;line-height:13px;padding-right:6px;">VC12(10)</div><div style="left:1006px;top:311px;width:10px;height:1px;background:#3A8DB8;"></div><div style="left:864px;top:319px;width:141px;height:16px;background:#FFFF00;border:1px solid #8C8C00;text-align:center;line-height:13px;padding-right:6px;">VC12(11)</div><div style="left:1006px;top:327px;width:10px;height:1px;background:#3A8DB8;"></div><div style="left:864px;top:335px;width:141px;height:16px;background:#FFFF00;border:1px solid #8C8C00;text-align:center;line-height:13px;padding-right:6px;">VC12(12)</div><div style="left:1006px;top:343px;width:10px;height:1px;background:#3A8DB8;"></div><div style="left:864px;top:351px;width:141px;height:16px;background:#FFFF00;border:1px solid #8C8C00;text-align:center;line-height:13px;padding-right:6px;">VC12(13)</div><div style="left:1006px;top:359px;width:10px;height:1px;background:#3A8DB8;"></div><div style="left:864px;top:367px;width:141px;height:16px;background:#FFFF00;border:1px solid #8C8C00;text-align:center;line-height:13px;padding-right:6px;">VC12(14)</div><div style="left:1006px;top:375px;width:10px;height:1px;background:#3A8DB8;"></div><div style="left:864px;top:383px;width:141px;height:16px;background:#FFFF00;border:1px solid #8C8C00;text-align:center;line-height:13px;padding-right:6px;">VC12(15)</div><div style="left:1006px;top:391px;width:10px;height:1px;background:#3A8DB8;"></div><div style="left:864px;top:399px;width:141px;height:16px;background:#FFFF00;border:1px solid #8C8C00;text-align:center;line-height:13px;padding-right:6px;">VC12(16)</div><div style="left:1006px;top:407px;width:10px;height:1px;background:#3A8DB8;"></div><div style="left:864px;top:415px;width:141px;height:16px;background:#FFFF00;border:1px solid #8C8C00;text-align:center;line-height:13px;padding-right:6px;">VC12(17)</div><div style="left:1006px;top:423px;width:10px;height:1px;background:#3A8DB8;"></div><div style="left:864px;top:431px;width:141px;height:16px;background:#FFFF00;border:1px solid #8C8C00;text-align:center;line-height:13px;padding-right:6px;">VC12(18)</div><div style="left:1006px;top:439px;width:10px;height:1px;background:#3A8DB8;"></div><div style="left:864px;top:447px;width:141px;height:16px;background:#FFFF00;border:1px solid #8C8C00;text-align:center;line-height:13px;padding-right:6px;">VC12(19)</div><div style="left:1006px;top:455px;width:10px;height:1px;background:#3A8DB8;"></div><div style="left:864px;top:463px;width:141px;height:16px;background:#FFFF00;border:1px solid #8C8C00;text-align:center;line-height:13px;padding-right:6px;">VC12(20)</div><div style="left:1006px;top:471px;width:10px;height:1px;background:#3A8DB8;"></div><div style="left:864px;top:479px;width:141px;height:16px;background:#FFFF00;border:1px solid #8C8C00;text-align:center;line-height:13px;padding-right:6px;">VC12(21)</div><div style="left:1006px;top:487px;width:10px;height:1px;background:#3A8DB8;"></div><div style="left:864px;top:495px;width:141px;height:16px;background:#FFFF00;border:1px solid #8C8C00;text-align:center;line-height:13px;padding-right:6px;">VC12(22)</div><div style="left:1006px;top:503px;width:10px;height:1px;background:#3A8DB8;"></div><div style="left:864px;top:511px;width:141px;height:16px;background:#FFFF00;border:1px solid #8C8C00;text-align:center;line-height:13px;padding-right:6px;">VC12(23)</div><div style="left:1006px;top:519px;width:10px;height:1px;background:#3A8DB8;"></div><div style="left:864px;top:527px;width:141px;height:16px;background:#FFFF00;border:1px solid #8C8C00;text-align:center;line-height:13px;padding-right:6px;">VC12(24)</div><div style="left:1006px;top:535px;width:10px;height:1px;background:#3A8DB8;"></div><div style="left:864px;top:543px;width:141px;height:16px;background:#FFFF00;border:1px solid #8C8C00;text-align:center;line-height:13px;padding-right:6px;">VC12(25)</div><div style="left:1006px;top:551px;width:10px;height:1px;background:#3A8DB8;"></div><div style="left:864px;top:559px;width:141px;height:16px;background:#FFFF00;border:1px solid #8C8C00;text-align:center;line-height:13px;padding-right:6px;">VC12(26)</div><div style="left:1006px;top:567px;width:10px;height:1px;background:#3A8DB8;"></div><div style="left:864px;top:575px;width:141px;height:16px;background:#FFFF00;border:1px solid #8C8C00;text-align:center;line-height:13px;padding-right:6px;">VC12(27)</div><div style="left:1006px;top:583px;width:10px;height:1px;background:#3A8DB8;"></div><div style="left:864px;top:591px;width:141px;height:16px;background:#FFFF00;border:1px solid #8C8C00;text-align:center;line-height:13px;padding-right:6px;">VC12(28)</div><div style="left:1006px;top:599px;width:10px;height:1px;background:#3A8DB8;"></div><div style="left:864px;top:607px;width:141px;height:16px;background:#FFFF00;border:1px solid #8C8C00;text-align:center;line-height:13px;padding-right:6px;">VC12(29)</div><div style="left:1006px;top:615px;width:10px;height:1px;background:#3A8DB8;"></div><svg class="i" style="left:502px;top:141px" width="362" height="482" viewBox="0 0 362 482"><path d="M0 194.600L362 23M0 210.600L362 39" stroke="#10E010" stroke-width="1.800"/><path d="M0 226.600L362 55M0 242.600L362 71" stroke="#F2F2F2" stroke-width="1.800"/></svg><div class="sbv" style="left:1084px;top:141px;width:16px;height:482px;"></div><div class="sbtn" style="left:1085px;top:142px;width:14px;height:15px;"></div><svg class="i" style="left:1088px;top:146px" width="7" height="6" viewBox="0 0 7 6"><polygon points="0,5 3.5,1 7,5" fill="#000"/></svg><div class="thumb" style="left:1084px;top:182px;width:16px;height:94px;"></div><div style="left:1088px;top:224.0px;width:8px;height:1px;background:#8CA6DC;"></div><div style="left:1088px;top:226.5px;width:8px;height:1px;background:#8CA6DC;"></div><div style="left:1088px;top:229.0px;width:8px;height:1px;background:#8CA6DC;"></div><div style="left:1088px;top:231.5px;width:8px;height:1px;background:#8CA6DC;"></div><div class="sbtn" style="left:1085px;top:607px;width:14px;height:15px;"></div><svg class="i" style="left:1088px;top:612px" width="7" height="6" viewBox="0 0 7 6"><polygon points="0,1 7,1 3.5,5" fill="#000"/></svg><div style="left:265px;top:622px;width:837px;height:2px;background:#E4E2D6;"></div><div style="left:265px;top:624px;width:837px;height:3px;background:#F1EFE2;"></div><div style="left:1104px;top:139px;width:112px;height:486px;overflow:hidden;"><div class="grp" style="left:6px;top:11px;width:100px;height:46px;"></div><span class="t " style="left:12px;top:5px;background:#F1EFE2;padding:0 2px;">编号方式</span><div style="left:14px;top:28px;width:83px;height:21px;background:#fff;border:1px solid;border-color:#5E5C55 #DAD7C8 #DAD7C8 #5E5C55;box-shadow:inset 1px 1px 0 #A5A398;"></div><span class="t " style="left:18px;top:33px;">间插编号</span><div style="left:78px;top:30px;width:17px;height:17px;border:1px solid;border-color:#F8F8F4 #8A887C #8A887C #F8F8F4;background:linear-gradient(#FFFFFF,#E8E6DC);"></div><svg class="i" style="left:83px;top:36px" width="7" height="6" viewBox="0 0 7 6"><polygon points="0,1 7,1 3.5,5" fill="#404040"/></svg><div class="grp" style="left:11px;top:75px;width:94px;height:29px;"></div><span class="t " style="left:15px;top:69px;background:#F1EFE2;padding:0 2px;">速率</span><div style="left:17px;top:81px;width:80px;height:21px;background:#fff;border:1px solid;border-color:#5E5C55 #DAD7C8 #DAD7C8 #5E5C55;box-shadow:inset 1px 1px 0 #A5A398;"></div><span class="t " style="left:21px;top:86px;">VC12</span><div style="left:78px;top:83px;width:17px;height:17px;border:1px solid;border-color:#F8F8F4 #8A887C #8A887C #F8F8F4;background:linear-gradient(#FFFFFF,#E8E6DC);"></div><svg class="i" style="left:83px;top:89px" width="7" height="6" viewBox="0 0 7 6"><polygon points="0,1 7,1 3.5,5" fill="#404040"/></svg><div class="grp" style="left:11px;top:120px;width:90px;height:400px;"></div><span class="t " style="left:15px;top:114px;background:#F1EFE2;padding:0 2px;">编辑操作</span><div class="grp" style="left:16px;top:136px;width:78px;height:57px;"></div><svg class="i" style="left:30px;top:146px" width="13" height="13" viewBox="0 0 13 13"><circle cx="6.5" cy="6.5" r="5.5" fill="#F6F5EC" stroke="#B0AC90"/></svg><span class="t " style="left:46px;top:146px;color:#AEAA8C;">查看</span><svg class="i" style="left:30px;top:168px" width="13" height="13" viewBox="0 0 13 13"><circle cx="6.5" cy="6.5" r="5.5" fill="#F6F5EC" stroke="#B0AC90"/><circle cx="6.5" cy="6.5" r="2.6" fill="none" stroke="#B0AC90" stroke-width="1.2"/></svg><span class="t " style="left:46px;top:169px;color:#AEAA8C;">编辑</span><div class="grp" style="left:16px;top:202px;width:78px;height:57px;"></div><svg class="i" style="left:30px;top:213px" width="13" height="13" viewBox="0 0 13 13"><circle cx="6.5" cy="6.5" r="5.5" fill="#fff" stroke="#7A8796"/></svg><span class="t " style="left:46px;top:214px;">单向</span><svg class="i" style="left:30px;top:235px" width="13" height="13" viewBox="0 0 13 13"><circle cx="6.5" cy="6.5" r="5.5" fill="#fff" stroke="#7A8796"/><circle cx="6.5" cy="6.5" r="2.8" fill="#2E7BD6"/></svg><span class="t " style="left:46px;top:236px;">双向</span><div class="btn dis" style="left:18px;top:273px;width:58px;height:21px;">确认</div><div class="btn dis" style="left:18px;top:306px;width:58px;height:21px;">取消</div><div class="btn dis" style="left:18px;top:339px;width:58px;height:21px;">删除</div><div class="btn" style="left:18px;top:376px;width:58px;height:21px;">属性</div><div class="btn" style="left:18px;top:409px;width:58px;height:21px;">导入</div><div class="btn" style="left:18px;top:442px;width:58px;height:21px;">导出</div><div class="btn" style="left:18px;top:475px;width:58px;height:21px;">过滤</div></div><div class="btn" style="left:270px;top:646px;width:73px;height:21px;">全部收缩</div><div class="btn" style="left:647px;top:646px;width:73px;height:21px;">全量应用</div><div class="btn" style="left:728px;top:646px;width:73px;height:21px;">时分查看</div><div class="btn" style="left:809px;top:646px;width:73px;height:21px;">阀值</div><div class="btn" style="left:890px;top:646px;width:73px;height:21px;">资源统计</div><div class="btn" style="left:971px;top:646px;width:73px;height:21px;">图例</div><div class="btn" style="left:1052px;top:646px;width:73px;height:21px;">增量应用</div><div class="btn" style="left:1133px;top:646px;width:73px;height:21px;">关闭</div><div style="left:302px;top:167px;width:500px;height:410px;background:#0A3BD8;border-radius:8px 8px 0 0;box-shadow:inset 0 0 0 1px #0024B8;"></div><div style="left:302px;top:167px;width:500px;height:30px;border-radius:8px 8px 0 0;background:linear-gradient(#0A5BE8 0,#3B8AF8 2px,#1565EC 5px,#0656E4 10px,#0555E2 20px,#0A60EE 25px,#0548D0 29px,#0548D0);"></div><div style="left:306px;top:196px;width:492px;height:377px;background:#F1EFE3;"></div><svg class="i" style="left:309px;top:175px" width="16" height="16" viewBox="0 0 16 16"><defs><linearGradient id="ai" x1="0" x2="1"><stop offset="0" stop-color="#1B2AA8"/><stop offset=".5" stop-color="#6F86E8"/><stop offset="1" stop-color="#1B2AA8"/></linearGradient></defs><rect width="16" height="16" fill="url(#ai)"/><path d="M3 5h3M10 4h3M3 8h4M9 8h4M4 11h2M10 11h3M8 2v12M5 4l-1 9M11 5v7" stroke="#E8EEFF" stroke-width="1.2" fill="none" opacity=".9"/></svg><span class="t " style="left:329px;top:177px;color:#fff;font-size:13px;text-shadow:1px 1px 0 #0A2A90;"><b>信息</b></span><div style="left:776px;top:172px;width:21px;height:21px;border:1px solid #fff;border-radius:3px;background:linear-gradient(135deg,#E89078,#D8502C 45%,#C03810);"><svg class="i" style="left:-1px;top:-1px" width="21" height="21" viewBox="0 0 20 20"><path d="M5.500 5.500l9 9M14.500 5.500l-9 9" stroke="#fff" stroke-width="2.200" stroke-linecap="round"/></svg></div><svg class="i" style="left:316px;top:226px" width="32" height="32" viewBox="0 0 32 32"><defs><radialGradient id="er" cx=".4" cy=".3" r=".8"><stop offset="0" stop-color="#F06050"/><stop offset=".5" stop-color="#CC1C16"/><stop offset="1" stop-color="#860E08"/></radialGradient></defs><circle cx="16" cy="16" r="15" fill="url(#er)" stroke="#7A0E0E" stroke-width="1.200"/><path d="M10.500 10.500l11 11M21.500 10.500l-11 11" stroke="#fff" stroke-width="5.500" stroke-linecap="butt"/></svg><span class="t " style="left:352px;top:236px;">操作失败</span><div class="btn" style="left:541px;top:292px;width:100px;height:22px;box-shadow:inset 0 0 0 2px #E8C878;position:absolute;"><svg class="i" style="position:absolute;left:19px;top:4px" width="9" height="11" viewBox="0 0 9 11"><path d="M1 5l3.500-3.500L8 5M1 9.500L4.500 6 8 9.500" stroke="#1818F0" stroke-width="1.600" fill="none"/></svg><span style="margin-left:16px">详细信息</span></div><div class="btn" style="left:647px;top:292px;width:80px;height:22px;">另存为...</div><div class="btn" style="left:734px;top:292px;width:60px;height:22px;">关闭</div><div class="grp" style="left:311px;top:327px;width:484px;height:242px;border-color:#B9B6A4;box-shadow:inset 1px 1px 0 #FBFAF4;"></div><span class="t " style="left:315px;top:322px;background:#F1EFE3;padding:0 2px;">执行结果</span><div style="left:313px;top:339px;width:480px;height:212px;background:#fff;"></div><div style="left:313px;top:339px;width:480px;height:18px;background:linear-gradient(#FDFDFA,#F6F5EE 70%,#E6E3D4);border-bottom:1px solid #A9A694;"></div><div style="left:392px;top:340px;width:2px;height:17px;background:#ACA998;border-right:1px solid #fff;"></div><div style="left:472px;top:340px;width:2px;height:17px;background:#ACA998;border-right:1px solid #fff;"></div><span class="t " style="left:329px;top:342px;">执行结果</span><span class="t " style="left:409px;top:342px;">对象名称</span><span class="t " style="left:619px;top:342px;">错误描述</span><div style="left:313px;top:358px;width:480px;height:22px;background:#F4F3EC;border-bottom:1px solid #C6C3B3;"></div><div style="left:393px;top:358px;width:1px;height:22px;background:#CFCCBC;"></div><div style="left:473px;top:358px;width:1px;height:22px;background:#CFCCBC;"></div><div style="left:320px;top:368px;width:10px;height:2px;background:#A8BEE0;"></div><svg class="i" style="left:333px;top:361px" width="16" height="16" viewBox="0 0 16 16"><circle cx="8" cy="8" r="7.300" fill="#DC2820" stroke="#8E1010" stroke-width=".9"/><ellipse cx="7" cy="5" rx="4.500" ry="3" fill="#F8A098" opacity=".55"/><path d="M5.300 5.300l5.400 5.400M10.700 5.300l-5.400 5.400" stroke="#fff" stroke-width="2"/></svg><span class="t " style="left:352px;top:363px;">失败</span><span class="t " style="left:395px;top:363px;">NE3102惠...</span><span class="t " style="left:477px;top:363px;">本单板不支持的命令</span><div class="sbh" style="left:313px;top:551px;width:480px;height:16px;border-top:1px solid #B9B7A9;"></div><div class="sbtn" style="left:314px;top:552px;width:14px;height:14px;"></div><svg class="i" style="left:318px;top:555px" width="6" height="7" viewBox="0 0 6 7"><polygon points="5,0 5,7 1,3.5" fill="#000"/></svg><div class="thumbh" style="left:329px;top:552px;width:304px;height:14px;"></div><div style="left:476.0px;top:556px;width:1px;height:7px;background:#8CA6DC;"></div><div style="left:478.5px;top:556px;width:1px;height:7px;background:#8CA6DC;"></div><div style="left:481.0px;top:556px;width:1px;height:7px;background:#8CA6DC;"></div><div style="left:483.5px;top:556px;width:1px;height:7px;background:#8CA6DC;"></div><div class="sbtn" style="left:778px;top:552px;width:14px;height:14px;"></div><svg class="i" style="left:783px;top:555px" width="6" height="7" viewBox="0 0 6 7"><polygon points="1,0 1,7 5,3.5" fill="#000"/></svg></div></body></html>
